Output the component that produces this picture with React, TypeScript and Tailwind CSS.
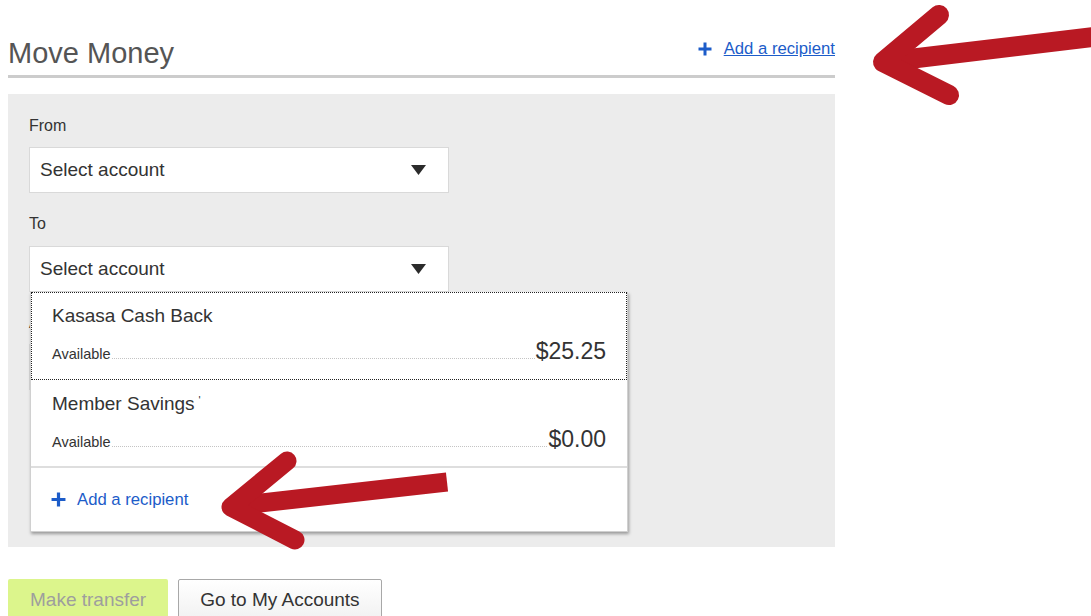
import { ReactNode } from 'react';

type Account = {
  name: string;
  available: string;
  mark?: boolean;
  focused?: boolean;
};

const accounts: Account[] = [
  { name: 'Kasasa Cash Back', available: '$25.25', focused: true },
  { name: 'Member Savings', available: '$0.00', mark: true },
];

function PlusIcon({ size = 14 }: { size?: number }) {
  return (
    <svg width={size} height={size} viewBox="0 0 14 14" className="shrink-0">
      <path d="M7 0.5v13M0.5 7h13" stroke="#1c5cc9" strokeWidth="3" />
    </svg>
  );
}

function Caret() {
  return (
    <svg width="15" height="10" viewBox="0 0 15 10" className="shrink-0">
      <path d="M0 0h15L7.5 10z" fill="#2b2b2b" />
    </svg>
  );
}

function SelectBox({ children }: { children?: ReactNode }) {
  return (
    <div className="flex h-[46px] w-[420px] items-center justify-between border border-[#d9d9d9] bg-white pl-[10px] pr-[22px]">
      <span className="text-[19px] leading-[22px] text-[#333]">Select account</span>
      <Caret />
      {children}
    </div>
  );
}

function Label({ text, className = '' }: { text: string; className?: string }) {
  return <div className={`text-[16px] leading-[24px] text-[#333] ${className}`}>{text}</div>;
}

function AccountOption({ account }: { account: Account }) {
  return (
    <div
      className={`px-[21px] pt-[13px] ${account.mark ? 'pb-[14px]' : 'pb-[16px]'} ${
        account.focused ? 'outline-1 outline-dotted outline-[#222] -outline-offset-1' : ''
      }`}
    >
      <div className="text-[19px] leading-[22px] text-[#333]">
        {account.name}
        {account.mark && <span className="ml-[4px] align-top text-[11px] leading-[14px]">'</span>}
      </div>
      <div className="mt-[11px] flex h-[26px] items-baseline">
        <span className="text-[14.5px] leading-[16px] text-[#333]">Available</span>
        <span className="mx-[1px] h-0 flex-1 border-b border-dotted border-[#c4c4c4]" />
        <span className="text-[23px] leading-[26px] text-[#333]">{account.available}</span>
      </div>
    </div>
  );
}

// Red call-out arrows drawn over the page
function Arrows() {
  const red = '#b91923';
  return (
    <svg
      className="pointer-events-none absolute left-0 top-0 z-20"
      width="1091"
      height="616"
      viewBox="0 0 1091 616"
    >
      <line x1="884" y1="62" x2="1110" y2="35" stroke={red} strokeWidth="20" />
      <polyline
        points="939,15 883,62 949,95"
        fill="none"
        stroke={red}
        strokeWidth="20"
        strokeLinecap="round"
        strokeLinejoin="round"
      />
      <line x1="234" y1="506" x2="447" y2="482" stroke={red} strokeWidth="19" />
      <polyline
        points="287,461 231,507 295,540"
        fill="none"
        stroke={red}
        strokeWidth="19"
        strokeLinecap="round"
        strokeLinejoin="round"
      />
    </svg>
  );
}

export default function App() {
  return (
    <div className="relative h-[616px] w-[1091px] overflow-hidden bg-white font-['Liberation_Sans',Arial,sans-serif]">
      <div className="w-[835px] pl-[8px] pt-[36px]">
        {/* Title bar */}
        <div className="flex items-start justify-between border-b-[3px] border-[#cccccc] pb-[5px]">
          <h1 className="text-[29px] leading-[34px] font-normal text-[#555]">Move Money</h1>
          <a href="#" className="mt-[1px] flex items-center gap-[12px] text-[16.7px] leading-[24px] text-[#1c5cc9] underline">
            <PlusIcon />
            Add a recipient
          </a>
        </div>

        {/* Transfer form */}
        <div className="mt-[16px] h-[453px] bg-[#ececec] pl-[21px] pt-[20px]">
          <Label text="From" className="mb-[9px]" />
          <SelectBox />

          <Label text="To" className="mb-[10px] mt-[19px]" />
          <div className="relative z-10 w-[420px]">
            <SelectBox />
            <div className="absolute left-[1px] top-full w-[598px] border-x border-b border-[#d0d0d0] bg-white shadow-[1px_2px_3px_rgba(0,0,0,0.35)]">
              {accounts.map((a) => (
                <AccountOption key={a.name} account={a} />
              ))}
              <div className="flex h-[65px] items-center gap-[11px] border-t-2 border-[#dedede] pl-[20px]">
                <PlusIcon size={15} />
                <span className="text-[16.7px] leading-[24px] text-[#1c5cc9]">Add a recipient</span>
              </div>
            </div>
          </div>

          <Label text="Amount" className="mb-[9px] mt-[19px]" />
          <div className="h-[46px] w-[420px] border border-[#d9d9d9] bg-white" />
        </div>

        {/* Actions */}
        <div className="mt-[32px] flex gap-[10px]">
          <button className="flex h-[42px] items-center rounded-[2px] bg-[#dcf58c] px-[22px] text-[19px] leading-[22px] text-[#9e9e9e]">
            Make transfer
          </button>
          <button className="flex h-[42px] items-center rounded-[2px] border border-[#a8a8a8] bg-gradient-to-b from-white to-[#f1f1f1] px-[21px] text-[19px] leading-[22px] text-[#333]">
            Go to My Accounts
          </button>
        </div>
      </div>

      <Arrows />
    </div>
  );
}
